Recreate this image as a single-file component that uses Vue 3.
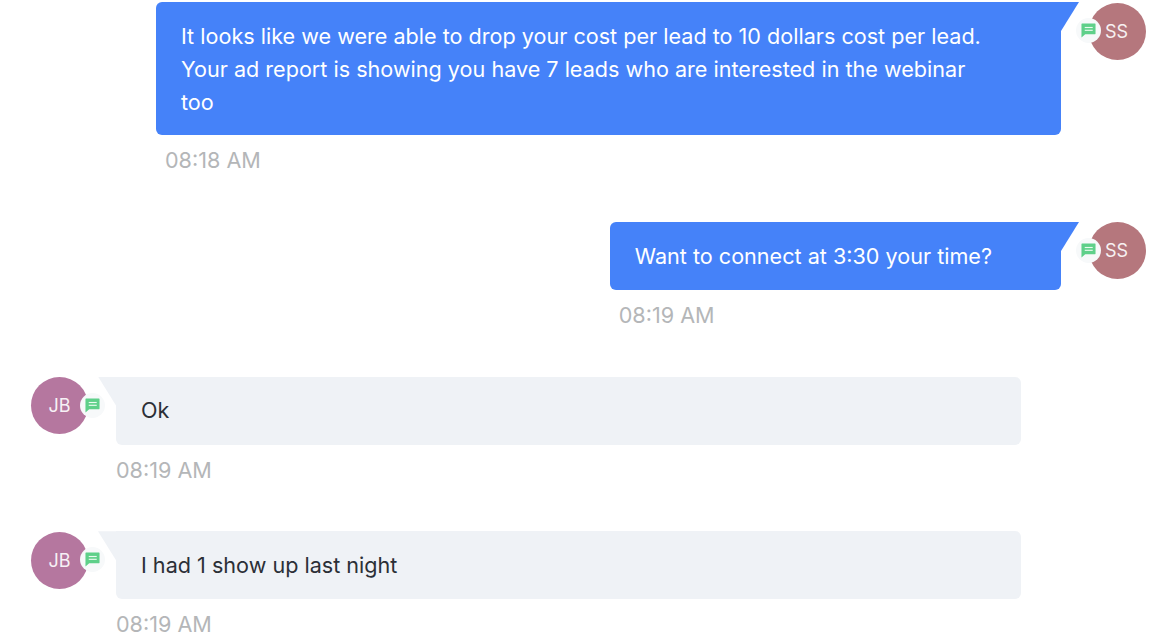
<template>
  <main class="chat">
    <div v-for="msg in messages" :key="msg.id" class="message" :class="msg.out ? 'out' : 'in'">
      <div class="avatar" :class="msg.out ? 'avatar-ss' : 'avatar-jb'">
        <span>{{ msg.out ? 'SS' : 'JB' }}</span>
        <div class="badge">
          <svg viewBox="0 0 16 16" width="15" height="15">
            <path d="M1 0.5h14a.5.5 0 0 1 .5.5v10.5a.5.5 0 0 1-.5.5H4.5l-4 3.5V1a.5.5 0 0 1 .5-.5z" fill="#5fd08a" />
            <rect x="4" y="4.2" width="8.5" height="1.2" fill="#eafaf0" />
            <rect x="4" y="7.2" width="8.5" height="1.2" fill="#eafaf0" />
          </svg>
        </div>
      </div>
      <div class="body">
        <div class="bubble">
          <div class="tail"></div>
          {{ msg.text }}
        </div>
        <p class="time">{{ msg.time }}</p>
      </div>
    </div>
  </main>
</template>

<script setup>
  const messages = [
    {
      id: 1,
      out: true,
      text: 'It looks like we were able to drop your cost per lead to 10 dollars cost per lead. Your ad report is showing you have 7 leads who are interested in the webinar too',
      time: '08:18 AM',
    },
    { id: 2, out: true, text: 'Want to connect at 3:30 your time?', time: '08:19 AM' },
    { id: 3, out: false, text: 'Ok', time: '08:19 AM' },
    { id: 4, out: false, text: 'I had 1 show up last night', time: '08:19 AM' },
  ]
</script>

<style>
  html, body {
    margin: 0;
    height: 100%;
    overflow: hidden;
    background: #fff;
  }
</style>

<style scoped>
  .chat {
    height: 632px;
    overflow: hidden;
    padding-top: 2px;
    box-sizing: border-box;
    font-family: Inter, "Liberation Sans", sans-serif;
  }

  .message {
    display: flex;
    gap: 28px;
    margin-bottom: 44.6px;
  }
  .message.out {
    flex-direction: row-reverse;
    padding-right: 19px;
  }
  .message.in {
    padding-left: 31px;
  }

  .avatar {
    position: relative;
    flex: none;
    width: 57px;
    height: 57px;
    margin-top: 0.5px;
    border-radius: 50%;
    display: flex;
    align-items: center;
    justify-content: center;
    color: #fff;
    font-size: 18px;
  }
  .avatar span {
    opacity: 0.9;
  }
  .avatar-ss {
    background-color: #b5777d;
  }
  .avatar-ss span {
    margin-right: 2px;
  }
  .avatar-jb {
    background-color: #b5779f;
  }

  .badge {
    position: absolute;
    width: 25px;
    height: 25px;
    border-radius: 50%;
    background-color: #f7f9fa;
    display: flex;
    align-items: center;
    justify-content: center;
    top: 15.5px;
  }
  .out .badge {
    left: -13px;
  }
  .in .badge {
    right: -16.5px;
  }

  .bubble {
    position: relative;
    box-sizing: border-box;
    min-height: 68px;
    padding: 17.6px 69px 16.8px 25px;
    border-radius: 6px;
    font-size: 21.6px;
    line-height: 33px;
  }
  .out .bubble {
    max-width: 905px;
    background-color: #4582f9;
    color: #fff;
    border-top-right-radius: 0;
  }
  .in .bubble {
    width: 905px;
    background-color: #eff2f6;
    color: #2b2f36;
    border-top-left-radius: 0;
  }

  .tail {
    position: absolute;
    top: 0;
    width: 18px;
    height: 29px;
  }
  .out .tail {
    left: 100%;
    background-color: #4582f9;
    clip-path: polygon(0 0, 100% 0, 0 100%);
  }
  .in .tail {
    right: 100%;
    background-color: #eff2f6;
    clip-path: polygon(0 0, 100% 0, 100% 100%);
  }

  .time {
    margin: 9px 0 0;
    font-size: 21.6px;
    line-height: 33px;
    color: #b4b6b8;
  }
  .out .time {
    padding-left: 9px;
  }
</style>
